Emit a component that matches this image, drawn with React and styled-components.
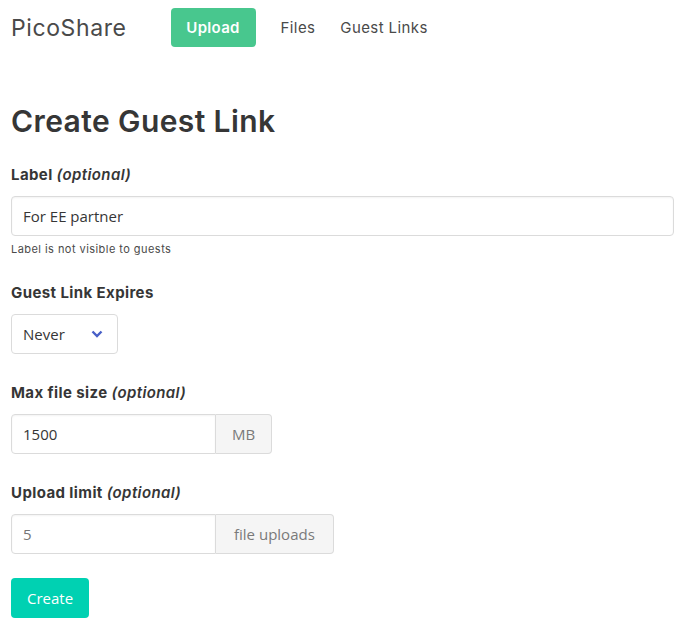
import React from "react"
import styled, { createGlobalStyle } from "styled-components"

const GlobalStyle = createGlobalStyle`
	html, body {
		margin: 0;
		padding: 0;
		background: #ffffff;
	}
	body {
		font-family: "Open Sans", "Liberation Sans", sans-serif;
		color: #4a4a4a;
	}
	* {
		box-sizing: border-box;
	}
`

const heading = `"Inter", "Liberation Sans", sans-serif`

const Nav = styled.nav`
	display: flex;
	align-items: center;
	height: 55px;
	padding: 0 11px;
`

const Brand = styled.div`
	font-family: ${heading};
	font-size: 23px;
	color: #4a4a4a;
	letter-spacing: 0.6px;
	margin-right: 44px;
`

const NavButton = styled.a`
	display: inline-flex;
	align-items: center;
	justify-content: center;
	height: 39px;
	width: 85px;
	background: #48c78e;
	color: #fff;
	border-radius: 4px;
	font-family: ${heading};
	font-weight: 600;
	font-size: 15px;
	letter-spacing: 0.3px;
	margin-right: 25px;
`

const NavLink = styled.a`
	font-family: ${heading};
	font-size: 15px;
	letter-spacing: 0.4px;
	color: #4a4a4a;
	margin-right: 25px;
`

const Main = styled.main`
	padding: 46px 11px 0 11px;
	max-width: 685px;
`

const Title = styled.h1`
	font-family: ${heading};
	font-size: 30px;
	font-weight: 600;
	letter-spacing: 0.4px;
	color: #363636;
	margin: 0 0 23px 0;
	line-height: 40px;
`

const Field = styled.div`
	margin-bottom: ${(p) => p.gap || "24px"};
`

const Label = styled.label`
	display: block;
	font-family: ${heading};
	font-weight: 700;
	font-size: 15px;
	letter-spacing: 0.4px;
	color: #363636;
	line-height: 22px;
	margin-bottom: 10px;
	em {
		font-weight: 600;
		font-style: italic;
	}
`

const Input = styled.input`
	display: block;
	width: ${(p) => p.width || "100%"};
	height: 40px;
	border: 1px solid #dbdbdb;
	border-radius: ${(p) => (p.addon ? "4px 0 0 4px" : "4px")};
	padding: 0 11px;
	font-family: "Open Sans", "Liberation Sans", sans-serif;
	font-size: 15px;
	color: #363636;
	box-shadow: inset 0 1px 2px rgba(10, 10, 10, 0.05);
	outline: none;
	::placeholder {
		color: #c4c4c4;
	}
`

const Help = styled.p`
	font-family: ${heading};
	font-size: 11px;
	letter-spacing: 0.45px;
	color: #4a4a4a;
	margin: 6px 0 0 0;
`

const SelectBox = styled.div`
	display: inline-flex;
	align-items: center;
	height: 40px;
	width: 107px;
	border: 1px solid #dbdbdb;
	border-radius: 4px;
	padding: 0 11px;
	font-size: 15px;
	color: #363636;
	justify-content: space-between;
	svg {
		margin-right: 3px;
	}
`

const AddonGroup = styled.div`
	display: flex;
`

const Addon = styled.span`
	display: inline-flex;
	align-items: center;
	height: 40px;
	padding: 0 ${(p) => p.pad || "16px"};
	background: #f5f5f5;
	border: 1px solid #dbdbdb;
	border-left: none;
	border-radius: 0 4px 4px 0;
	color: #7a7a7a;
	font-size: 15px;
`

const Button = styled.button`
	height: 40px;
	padding: 0 16px;
	background: #00d1b2;
	color: #fff;
	border: none;
	border-radius: 4px;
	font-family: "Open Sans", "Liberation Sans", sans-serif;
	font-size: 15px;
	cursor: pointer;
`

const Chevron = () => (
	<svg width="12" height="8" viewBox="0 0 12 8">
		<path d="M1.5 1.5 L6 6 L10.5 1.5" fill="none" stroke="#485fc7" strokeWidth="2.4" />
	</svg>
)

export default function App() {
	return (
		<>
			<GlobalStyle />
			<Nav>
				<Brand>PicoShare</Brand>
				<NavButton>Upload</NavButton>
				<NavLink>Files</NavLink>
				<NavLink>Guest Links</NavLink>
			</Nav>
			<Main>
				<Title>Create Guest Link</Title>
				<Field gap="26px">
					<Label>
						Label <em>(optional)</em>
					</Label>
					<Input defaultValue="For EE partner" />
					<Help>Label is not visible to guests</Help>
				</Field>
				<Field gap="28px">
					<Label>Guest Link Expires</Label>
					<SelectBox>
						<span>Never</span>
						<Chevron />
					</SelectBox>
				</Field>
				<Field gap="28px">
					<Label>
						Max file size <em>(optional)</em>
					</Label>
					<AddonGroup>
						<Input addon width="205px" defaultValue="1500" />
						<Addon>MB</Addon>
					</AddonGroup>
				</Field>
				<Field gap="24px">
					<Label>
						Upload limit <em>(optional)</em>
					</Label>
					<AddonGroup>
						<Input addon width="205px" placeholder="5" />
						<Addon pad="18px">file uploads</Addon>
					</AddonGroup>
				</Field>
				<Button>Create</Button>
			</Main>
		</>
	)
}
